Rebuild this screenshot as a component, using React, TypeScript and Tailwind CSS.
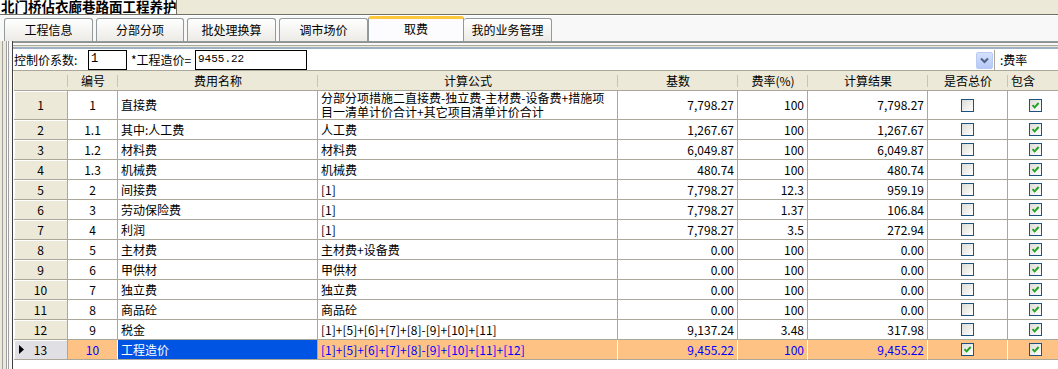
import React from "react";

type Row = {
  no: string;
  code: string;
  name: string;
  formula: React.ReactNode;
  base: string;
  rate: string;
  result: string;
  total: boolean;
  include: boolean;
};

const rows: Row[] = [
  {
    no: "1",
    code: "1",
    name: "直接费",
    formula: (
      <>
        分部分项措施二直接费-独立费-主材费-设备费+措施项
        <br />
        目一清单计价合计+其它项目清单计价合计
      </>
    ),
    base: "7,798.27",
    rate: "100",
    result: "7,798.27",
    total: false,
    include: true,
  },
  { no: "2", code: "1.1", name: "其中:人工费", formula: "人工费", base: "1,267.67", rate: "100", result: "1,267.67", total: false, include: true },
  { no: "3", code: "1.2", name: "材料费", formula: "材料费", base: "6,049.87", rate: "100", result: "6,049.87", total: false, include: true },
  { no: "4", code: "1.3", name: "机械费", formula: "机械费", base: "480.74", rate: "100", result: "480.74", total: false, include: true },
  { no: "5", code: "2", name: "间接费", formula: "[1]", base: "7,798.27", rate: "12.3", result: "959.19", total: false, include: true },
  { no: "6", code: "3", name: "劳动保险费", formula: "[1]", base: "7,798.27", rate: "1.37", result: "106.84", total: false, include: true },
  { no: "7", code: "4", name: "利润", formula: "[1]", base: "7,798.27", rate: "3.5", result: "272.94", total: false, include: true },
  { no: "8", code: "5", name: "主材费", formula: "主材费+设备费", base: "0.00", rate: "100", result: "0.00", total: false, include: true },
  { no: "9", code: "6", name: "甲供材", formula: "甲供材", base: "0.00", rate: "100", result: "0.00", total: false, include: true },
  { no: "10", code: "7", name: "独立费", formula: "独立费", base: "0.00", rate: "100", result: "0.00", total: false, include: true },
  { no: "11", code: "8", name: "商品砼", formula: "商品砼", base: "0.00", rate: "100", result: "0.00", total: false, include: true },
  { no: "12", code: "9", name: "税金", formula: "[1]+[5]+[6]+[7]+[8]-[9]+[10]+[11]", base: "9,137.24", rate: "3.48", result: "317.98", total: false, include: true },
  { no: "13", code: "10", name: "工程造价", formula: "[1]+[5]+[6]+[7]+[8]-[9]+[10]+[11]+[12]", base: "9,455.22", rate: "100", result: "9,455.22", total: true, include: true },
];

const tabs = [
  { label: "工程信息", w: "w-[89px]", ml: "ml-[4px]" },
  { label: "分部分项", w: "w-[88px]", ml: "ml-[3px]" },
  { label: "批处理换算", w: "w-[89px]", ml: "ml-[3px]" },
  { label: "调市场价", w: "w-[89px]", ml: "ml-[3px]" },
];

function Check({ on }: { on: boolean }) {
  return (
    <span className="inline-flex h-[13px] w-[13px] items-center justify-center border border-[#1C5180] bg-linear-to-br from-[#DCDCD7] to-white">
      {on && (
        <svg width="9" height="9" viewBox="0 0 9 9">
          <path d="M1.5 4.2 L3.6 6.4 L7.6 2" stroke="#21A121" strokeWidth="1.9" fill="none" />
        </svg>
      )}
    </span>
  );
}

function Head({ w, children, left }: { w: string; children?: React.ReactNode; left?: boolean }) {
  return (
    <div
      className={`relative flex h-full ${w} shrink-0 items-center ${left ? "pl-[3px]" : "justify-center"} border-b border-[#ACA899] after:absolute after:right-0 after:top-[4px] after:bottom-[3px] after:w-px after:bg-[#C7C5B2]`}
    >
      {children}
    </div>
  );
}

export default function App() {
  return (
    <div className="h-[369px] w-[1058px] overflow-hidden bg-[#ECE9D8] font-['Noto_Sans_CJK_SC',sans-serif] text-[12px] text-black">
      {/* title */}
      <div className="flex h-[14px]">
        <div className="w-[177px] overflow-hidden border-r border-[#716F64] bg-white">
          <div className="-mt-[2px] whitespace-nowrap pl-[1px] text-[13.5px] font-bold leading-[16px]">北门桥佔衣廊巷路面工程养护</div>
        </div>
      </div>
      <div className="h-[2px] border-t border-[#716F64] bg-white" />

      {/* tabs */}
      <div className="flex h-[25px] items-end bg-[#F8F8F8]">
        {tabs.map((t) => (
          <div
            key={t.label}
            className={`${t.w} ${t.ml} flex h-[23px] items-center justify-center rounded-t-[3px] border border-b-0 border-[#919B9C] bg-linear-to-b from-white to-[#ECEBE6]`}
          >
            {t.label}
          </div>
        ))}
        <div className="flex h-[25px] w-[96px] items-center justify-center rounded-t-[3px] border-x border-t-[3px] border-[#919B9C] border-t-[#FFC83C] bg-[#FCFCFE] pb-[3px]">
          取费
        </div>
        <div className="flex h-[23px] w-[88px] items-center justify-center rounded-t-[3px] border border-b-0 border-l-0 border-[#919B9C] bg-linear-to-b from-white to-[#ECEBE6]">
          我的业务管理
        </div>
      </div>

      <div className="flex h-[328px]">
        {/* left frame */}
        <div className="flex w-[13px] shrink-0">
          <div className="w-[2px]" />
          <div className="w-px bg-[#A0A0A0]" />
          <div className="w-[3px]" />
          <div className="w-px bg-[#A0A0A0]" />
          <div className="w-px bg-white" />
          <div className="w-px bg-[#A0A0A0]" />
          <div className="w-[3px] bg-[#F8F8F8]" />
          <div className="w-px bg-[#404040]" />
        </div>

        <div className="flex min-w-0 flex-1 flex-col bg-white">
          {/* frame lines */}
          <div className="h-px bg-[#919B9C]" />
          <div className="h-px bg-[#8E8F8F]" />
          <div className="h-[2px] bg-[#F8F8F8]" />
          <div className="h-px bg-[#ACA899]" />
          <div className="h-px bg-[#ECE9D8]" />
          <div className="h-[2px] bg-[#9DB0C4]" />
          <div className="h-px bg-white" />

          {/* control row */}
          <div className="flex h-[21px] shrink-0 items-center border-b border-[#ACA899] bg-white">
            <span className="w-[75px] pl-[1px]">控制价系数:</span>
            <div className="h-[20px] w-[39px] border border-black pl-[2px] font-['Liberation_Mono',monospace] leading-[16px]">1</div>
            <span className="ml-[4px] w-[64px]">*工程造价=</span>
            <div className="h-[20px] w-[112px] border border-black pl-[2px] font-['Liberation_Mono',monospace] text-[11px] leading-[17px]">9455.22</div>
            <div className="flex h-full flex-1 items-center justify-end">
              <div className="flex h-[17px] w-[17px] items-center justify-center rounded-[2px] border border-[#B9CBF3] bg-linear-to-b from-[#D5E1FC] to-[#B6C9F6]">
                <svg width="9" height="7" viewBox="0 0 9 7">
                  <path d="M1 1.5 L4.5 5 L8 1.5" stroke="#4D6185" strokeWidth="2" fill="none" />
                </svg>
              </div>
            </div>
            <div className="ml-[1px] h-full w-px bg-[#ACA899]" />
            <span className="w-[63px] pl-[5px]">:费率</span>
          </div>

          {/* header */}
          <div className="ml-px flex h-[20px] shrink-0 bg-[#ECE9D8]">
            <Head w="w-[54px]" />
            <Head w="w-[50px]">编号</Head>
            <Head w="w-[200px]">费用名称</Head>
            <Head w="w-[300px]">计算公式</Head>
            <Head w="w-[120px]">基数</Head>
            <Head w="w-[70px]">费率(%)</Head>
            <Head w="w-[120px]">计算结果</Head>
            <Head w="w-[80px]">是否总价</Head>
            <Head w="w-[56px]" left>包含</Head>
          </div>

          {/* rows */}
          {rows.map((r, i) => {
            const sel = i === rows.length - 1;
            const h = i === 0 ? "h-[29px]" : "h-[20px]";
            const cell = `flex shrink-0 items-center border-b border-r border-[#ACA899] ${sel ? "bg-[#FFC285] text-[#0000FF] border-r-white" : "bg-white"}`;
            return (
              <div key={r.no} className={`ml-px flex ${h} shrink-0`}>
                <div
                  className={`relative flex w-[54px] shrink-0 items-center justify-center border-b border-r border-[#ACA899] shadow-[inset_1px_1px_0_#fff] ${sel ? "bg-[#E0DFE3]" : "bg-[#ECE9D8]"}`}
                >
                  {sel && (
                    <svg className="absolute left-[5px] top-[5px]" width="5" height="9" viewBox="0 0 5 9">
                      <path d="M0 0 L5 4.5 L0 9 Z" fill="#000" />
                    </svg>
                  )}
                  {r.no}
                </div>
                <div className={`${cell} w-[50px] justify-center`}>{r.code}</div>
                <div
                  className={`flex w-[200px] shrink-0 items-center border-b border-r border-[#ACA899] pl-[3px] ${sel ? "bg-[#0054E3] text-white" : "bg-white"}`}
                >
                  {r.name}
                </div>
                <div className={`${cell} w-[300px] pl-[3px] ${i === 0 ? "items-start leading-[14px]" : ""}`}>
                  <div className="whitespace-nowrap">{r.formula}</div>
                </div>
                <div className={`${cell} w-[120px] justify-end pr-[3px]`}>{r.base}</div>
                <div className={`${cell} w-[70px] justify-end pr-[3px]`}>{r.rate}</div>
                <div className={`${cell} w-[120px] justify-end pr-[3px]`}>{r.result}</div>
                <div className={`${cell} w-[80px] justify-center`}>
                  <Check on={r.total} />
                </div>
                <div className={`${cell} w-[56px] justify-center`}>
                  <Check on={r.include} />
                </div>
              </div>
            );
          })}
        </div>
      </div>
    </div>
  );
}
